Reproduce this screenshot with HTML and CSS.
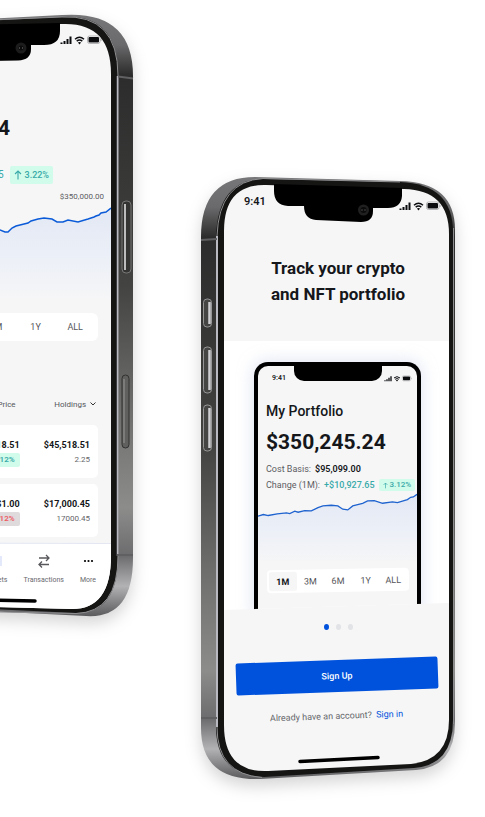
FILE: index.html
```
<!DOCTYPE html>
<html lang="en">
<head>
	<meta charset="UTF-8"/>
	<meta name="viewport" content="width=device-width, initial-scale=1.0" />
	<title>Portfolio Tracker</title>
	<link rel="stylesheet" href="styles.css">
</head>
<body>

<svg width="0" height="0" class="defs" aria-hidden="true">
	<symbol id="signals" viewBox="0 0 42 10">
		<path d="M1.500 9v-1.500M4.500 9v-3M7.500 9v-5M10.500 9v-7.500" stroke="#0b0c0e" stroke-width="2"/>
		<path d="M15 4.200q4.500-3.900 9 0M16.700 6.200q2.800-2.300 5.600 0" fill="none" stroke="#0b0c0e" stroke-width="1.500"/>
		<path d="M17.900 7.600q1.600-1.100 3.200 0l-1.600 1.900z" fill="#0b0c0e"/>
		<rect x="27.500" y="1" width="12.500" height="7.500" rx="2" fill="#fff" stroke="#b5b5b7" stroke-width="1"/>
		<rect x="28.500" y="2" width="10.500" height="5.500" rx="1" fill="#0b0c0e"/>
		<path d="M41 4v2" stroke="#a9a9ab"/>
	</symbol>
	<symbol id="up" viewBox="0 0 8 10">
		<path d="M4 9.500V1M1 4l3-3 3 3" fill="none" stroke="currentColor" stroke-width="1.100"/>
	</symbol>
	<linearGradient id="area" x1="0" y1="0" x2="0" y2="1">
		<stop offset="0" stop-color="#e2e8f4"/>
		<stop offset=".5" stop-color="#ebeff7"/>
		<stop offset="1" stop-color="#f6f6f7"/>
	</linearGradient>
	<linearGradient id="metal" x1="0" y1="0" x2="0" y2="1">
		<stop offset="0" stop-color="#777779"/>
		<stop offset=".05" stop-color="#6a6a6c"/>
		<stop offset=".1" stop-color="#2c2c2c"/>
		<stop offset=".45" stop-color="#434341"/>
		<stop offset=".65" stop-color="#6d6d6b"/>
		<stop offset=".82" stop-color="#8c8c8b"/>
		<stop offset=".9" stop-color="#6c6c6e"/>
		<stop offset=".95" stop-color="#b2b2b5"/>
		<stop offset="1" stop-color="#5b5b5e"/>
	</linearGradient>
</svg>

<main class="scene">

<section class="phone phone-back">
	<svg class="frame" viewBox="-116 14 250 604" aria-hidden="true">
		<path d="M-116 24L62 15Q133 10 133 76V558Q133 619 86 616L-116 606z" fill="url(#metal)"/>
		<path d="M-116 26L62 17Q118 13 118 76V556Q118 613 76 613L-116 604z" fill="#151514"/>
		<path d="M0 19.500L62 17Q118 14 118 76V556Q118 612 76 613.500L0 612" fill="none" stroke="#8f8f92" stroke-width="1"/>
		<path d="M117.500 76V556" stroke="#b9b9c2" stroke-width="1.500"/>
		<path d="M-116 28L62 24Q111 22 111 74V556Q111 609 72 609L-116 604z" fill="#f6f6f7"/>
		<path d="M-116 544L111 543V556Q111 609 72 609L-116 604z" fill="#fff"/>
		<path d="M-116 543L111 543.500" stroke="#e4e7f2"/>
		<path d="M-90 26L60 23V31Q60 45 44 45H31V49Q31 60 18 60.500L-60 62V46H-75Q-90 46-90 30z" fill="#000"/>
		<circle cx="21" cy="48" r="5.500" fill="#1c1c1c"/>
		<circle cx="21" cy="48" r="2.500" fill="#0b0b0b"/>
		<path d="M19.500 47v2M22.500 47v2" stroke="#444"/>
		<path d="M118 76.500l15 2M117 555h16" stroke="#606062" stroke-width="2"/>
		<rect x="122" y="201" width="9" height="72" rx="4" fill="#343433" stroke="#777" stroke-width="1"/>
		<path d="M125 204v66" stroke="#bcbcbc" stroke-width="2"/>
		<rect x="122" y="375" width="7" height="73" rx="3.500" fill="#60605f" stroke="#313131" stroke-width="1"/>
		<path d="M124 379v64" stroke="#989898"/>
		<path d="M-60 599L35 601" stroke="#000" stroke-width="3.500" stroke-linecap="round"/>
	</svg>
	<div class="screen">
		<div class="status status-back"><svg class="signals" aria-label="Signal, wifi and battery"><use href="#signals"/></svg></div>
		<div class="total total-back">$350,245.24</div>
		<div class="change change-back"><span>+$10,927.65</span><span class="badge badge-back"><svg class="up"><use href="#up"/></svg>3.22%</span></div>
		<div class="peak">$350,000.00</div>
		<svg class="chart" viewBox="-116 204 227 96" aria-hidden="true">
			<path d="M-116 240L-60 236L0 230L5 232L8 232L12 228L16 226L22 224.500L28 223L31 221L38 219L44 218L52 219L57 222L63 222L68 220L78 222L88 219L94 217L96 216L99 215L101 213L106 212L111 208V300H-116z" fill="url(#area)"/>
			<path d="M-116 240L-60 236L0 230L5 232L8 232L12 228L16 226L22 224.500L28 223L31 221L38 219L44 218L52 219L57 222L63 222L68 220L78 222L88 219L94 217L96 216L99 215L101 213L106 212L111 208" fill="none" stroke="#0b5bd8" stroke-width="1.500"/>
		</svg>
		<div class="ranges ranges-back">
			<button>1M</button><button>3M</button><button>6M</button><button>1Y</button><button>ALL</button>
		</div>
		<table class="holdings">
			<thead>
				<tr><th>Price</th><th>Holdings <svg class="caret" viewBox="0 0 6 4"><path d="M.5.5L3 3 5.500.5" fill="none" stroke="#333" stroke-width="1"/></svg></th></tr>
			</thead>
			<tbody>
				<tr><td><b>$45,518.51</b><span class="pill">3.12%</span></td><td><b>$45,518.51</b><span>2.25</span></td></tr>
				<tr><td><b>$1.00</b><span class="pill pill-down">3.12%</span></td><td><b>$17,000.45</b><span>17000.45</span></td></tr>
			</tbody>
		</table>
		<nav class="tabbar">
			<a href="#assets"><svg viewBox="0 0 16 16"><rect x="0" y="3" width="13" height="10" fill="#e3e8fa"/></svg>Assets</a>
			<a href="#transactions"><svg viewBox="0 0 16 16"><path d="M3 5h10M10 2l3 3-3 3M13 11.500H3M6 8.500l-3 3 3 3" fill="none" stroke="#58585c" stroke-width="1.300"/></svg>Transactions</a>
			<a href="#more"><svg viewBox="0 0 16 16"><circle cx="5" cy="8" r="1.100"/><circle cx="8.500" cy="8" r="1.100"/><circle cx="12" cy="8" r="1.100"/></svg>More</a>
		</nav>
	</div>
</section>

<section class="phone phone-front">
	<svg class="frame" viewBox="201 176 255 604" aria-hidden="true">
		<path d="M201 237Q201 177 255 177L400 181Q455 182 455 230V722Q455 767 416 770L260 779Q201 781 201 728z" fill="url(#metal)"/>
		<path d="M216 236Q218 180 263 179L400 182Q453 184 453 232V720Q453 765 414 768L264 777Q216 775 216 727z" fill="#151514"/>
		<path d="M262 777.500Q217 774 217 727V236Q219 181 263 178.500L400 182" fill="none" stroke="#8f8f92" stroke-width="1"/>
		<path d="M217 236V727" stroke="#b9b9c2" stroke-width="2"/>
		<path d="M453.500 228V724" stroke="#8d8d90"/>
		<path d="M224 231Q224 184 266 185L404 189Q449 190 449 234V720Q449 760 411 764L268 771Q224 773 224 725z" fill="#f6f6f7"/>
		<path d="M274 184L402 188V196Q401 208 388 208H373V211Q373 222 361 222L316 220Q304 219 304 206H288Q274 205 274 191z" fill="#000"/>
		<circle cx="363.500" cy="210" r="5.500" fill="#202020"/>
		<circle cx="363.500" cy="210" r="3" fill="#0b0b0b"/>
		<path d="M362 209v2M365 209v2" stroke="#444"/>
		<path d="M201 240l16-1M201 718h16" stroke="#606062" stroke-width="2"/>
		<g fill="#454544" stroke="#969696" stroke-width="1">
			<rect x="203.500" y="299" width="8" height="28" rx="3.500"/>
			<rect x="203.500" y="347" width="8" height="46" rx="3.500"/>
			<rect x="203.500" y="405" width="8" height="46" rx="3.500"/>
		</g>
		<path d="M209.500 302v22M209.500 350v40M209.500 408v40" stroke="#cfcfd2" stroke-width="2.500"/>
		<path d="M300 761.500L378 757.500" stroke="#000" stroke-width="3.500" stroke-linecap="round"/>
	</svg>
	<div class="screen">
		<div class="status status-front"><time>9:41</time><svg class="signals" aria-label="Signal, wifi and battery"><use href="#signals"/></svg></div>
		<h1>Track your crypto<br>and NFT portfolio</h1>
		<div class="preview">
			<div class="mini">
				<div class="mini-status"><time>9:41</time><span class="mini-notch"></span><svg class="signals"><use href="#signals"/></svg></div>
				<h2>My Portfolio</h2>
				<div class="total">$350,245.24</div>
				<div class="basis">Cost Basis: <b>$95,099.00</b></div>
				<div class="basis">Change (1M): <span class="gain">+$10,927.65</span><span class="badge"><svg class="up"><use href="#up"/></svg>3.12%</span></div>
				<svg class="chart" viewBox="204 462 480 210" aria-hidden="true">
					<path d="M204 532L220 527L235 530L262 525L290 522L300 524L315 517L325 520L345 515L365 516L385 506L400 501L425 499L445 501L460 511L475 513L490 501L520 493L535 486L555 485L580 493L610 489L625 491L655 482L665 475L673 474L684 466V672H204z" fill="url(#area)"/>
					<path d="M204 532L220 527L235 530L262 525L290 522L300 524L315 517L325 520L345 515L365 516L385 506L400 501L425 499L445 501L460 511L475 513L490 501L520 493L535 486L555 485L580 493L610 489L625 491L655 482L665 475L673 474L684 466" fill="none" stroke="#1f63cf" stroke-width="4"/>
				</svg>
				<div class="ranges">
					<button class="on">1M</button><button>3M</button><button>6M</button><button>1Y</button><button>ALL</button>
				</div>
			</div>
		</div>
		<div class="dots"><i class="on"></i><i></i><i></i></div>
		<button class="signup">Sign Up</button>
		<p class="signin">Already have an account? <a href="#signin">Sign in</a></p>
	</div>
</section>

</main>

</body>
</html>
```
FILE: styles.css
```
	html {
		font-family: Roboto, "Liberation Sans", sans-serif;
		font-size: 10px;
		color: #15171a;
		background: #fff;
	}
	body {
		margin: 0;
		overflow-x: hidden;
	}
	h1, h2, p {
		margin: 0;
	}
	button {
		font: inherit;
		color: inherit;
		border: 0;
		padding: 0;
		background: none;
	}
	a {
		text-decoration: none;
	}
	svg {
		display: block;
		flex: none;
	}
	.defs {
		position: absolute;
	}
	.scene {
		display: flex;
		align-items: flex-start;
		gap: 67px;
		padding: 14px 0 30px;
	}
	.phone {
		position: relative;
		flex: none;
		box-sizing: border-box;
	}
	.phone-back {
		width: 250px;
		margin-left: -116px;
		padding: 6px 23px 30px 0;
	}
	.phone-front {
		width: 255px;
		margin-top: 162px;
		padding: 9px 7px 54px 23px;
	}
	.frame {
		position: absolute;
		top: 0;
		left: 0;
		width: 100%;
		overflow: visible;
		filter: drop-shadow(0 7px 8px rgb(0 0 0 / .17));
	}
	.screen {
		position: relative;
		display: flex;
		flex-direction: column;
	}
	.signals {
		width: 42px;
		height: 10px;
	}
	.status {
		display: flex;
		justify-content: space-between;
		font-size: 11px;
		font-weight: 600;
	}
	.status-back {
		justify-content: flex-end;
		padding: 15px 9px 69px 0;
	}
	.status-front {
		box-sizing: border-box;
		height: 61px;
		padding: 9px 8px 0 20px;
		line-height: 16px;
	}
	.status-front .signals {
		margin-top: 7px;
	}
	.total {
		font-size: 21px;
		line-height: 24px;
		font-weight: 700;
	}
	.total-back {
		line-height: 28px;
		text-align: right;
		padding-right: 101px;
	}
	.change {
		display: flex;
		justify-content: flex-end;
		align-items: center;
		gap: 6px;
		color: #38aaa9;
	}
	.change-back {
		margin-top: 24px;
		padding-right: 58px;
		line-height: 18px;
	}
	.badge {
		display: flex;
		align-items: center;
		justify-content: center;
		gap: 2px;
		height: 12px;
		padding: 0 4px;
		border-radius: 2px;
		background: #d1fbea;
		color: #38aaa9;
		font-size: 8px;
		font-weight: 500;
	}
	.badge-back {
		height: 18px;
		gap: 3px;
		font-size: 9px;
	}
	.up {
		width: 5px;
		height: 7px;
	}
	.badge-back .up {
		width: 8px;
		height: 10px;
	}
	.peak {
		margin-top: 6px;
		padding-right: 7px;
		font-size: 8px;
		line-height: 14px;
		text-align: right;
		color: #5c5d61;
	}
	.chart {
		width: 100%;
	}
	.ranges {
		display: grid;
		grid-template-columns: repeat(5, 1fr);
		height: 23px;
		margin: 6px 8px 0 9px;
		padding: 2px;
		box-sizing: border-box;
		border-radius: 4px;
		background: #fff;
		color: #55565a;
		font-size: 9px;
		transform: rotate(-1deg);
	}
	.ranges .on {
		background: #f6f6f7;
		color: #15171a;
		font-weight: 700;
		border-radius: 2px;
	}
	.ranges-back {
		height: 28px;
		margin: 13px 13px 0;
		padding: 0 3px 0 0;
		border-radius: 6px;
		transform: none;
	}
	.holdings {
		margin: 48px 13px 0;
		border-collapse: separate;
		border-spacing: 0 6px;
		text-align: right;
	}
	.holdings th {
		height: 18px;
		padding: 0 2px 6px 0;
		font-size: 8px;
		font-weight: 400;
		color: #55565a;
		text-align: right;
	}
	.holdings th:first-child {
		width: 61%;
		padding-right: 4px;
	}
	.caret {
		display: inline-block;
		width: 6px;
		height: 4px;
		margin-left: 2px;
		vertical-align: middle;
	}
	.holdings td {
		height: 53px;
		padding: 0 8px 0 0;
		background: #fff;
		color: #65666a;
		font-size: 8px;
	}
	.holdings td:first-child {
		padding-right: 0;
		border-radius: 5px 0 0 5px;
	}
	.holdings td:last-child {
		border-radius: 0 5px 5px 0;
	}
	.holdings b {
		display: block;
		font-size: 9px;
		line-height: 16px;
		font-weight: 700;
		color: #15171a;
	}
	.holdings td span {
		display: inline-block;
		line-height: 14px;
	}
	.holdings .pill {
		padding: 0 5px;
		background: #d1fbea;
		color: #38aaa9;
		font-weight: 600;
		border-radius: 2px;
	}
	.holdings .pill-down {
		background: #dfdbdd;
		color: #ee5a62;
	}
	.tabbar {
		display: flex;
		justify-content: flex-end;
		gap: 16px;
		padding: 10px 15px 0 0;
	}
	.tabbar a {
		display: flex;
		flex-direction: column;
		align-items: center;
		gap: 5px;
		font-size: 7px;
		line-height: 12px;
		color: #696a6e;
	}
	.tabbar svg {
		width: 16px;
		height: 16px;
	}
	h1 {
		height: 86px;
		padding-top: 9px;
		padding-left: 3px;
		text-align: center;
		font-size: 17px;
		line-height: 26px;
		font-weight: 700;
	}
	.preview {
		height: 248px;
		padding: 21px 28px 0 30px;
		background: #fff;
		clip-path: polygon(0 0, 100% 0, 100% 262px, 0 100%);
	}
	.mini {
		height: 247px;
		border: 4px solid #000;
		border-width: 4px 4px 0;
		border-radius: 14px 14px 0 0;
		background: #f6f6f7;
		box-shadow: 0 0 14px 3px rgb(205 214 236 / .5);
	}
	.mini-status {
		display: flex;
		height: 36px;
		padding: 0 5px 0 14px;
		font-size: 7px;
		font-weight: 600;
		line-height: 24px;
	}
	.mini-notch {
		width: 88px;
		height: 15px;
		margin: 0 2px 0 auto;
		border-radius: 0 0 10px 10px;
		background: #000;
	}
	.mini-status .signals {
		width: 28px;
		height: 7px;
		margin-top: 9px;
	}
	.mini h2 {
		padding-left: 8px;
		font-size: 14px;
		line-height: 18px;
		font-weight: 500;
	}
	.mini .total {
		padding: 10px 0 7px 8px;
	}
	.basis {
		display: flex;
		align-items: center;
		gap: 4px;
		padding-left: 8px;
		font-size: 9px;
		line-height: 16px;
		color: #5c5d61;
		white-space: nowrap;
	}
	.basis b {
		font-weight: 600;
		color: #15171a;
	}
	.gain {
		color: #38aaa9;
		font-weight: 500;
	}
	.dots {
		display: flex;
		justify-content: center;
		gap: 7px;
		margin: 14px 0 30px 3px;
	}
	.dots i {
		width: 5px;
		height: 6px;
		border-radius: 50%;
		background: #e2e3e6;
	}
	.dots .on {
		background: #0052dc;
	}
	.signup {
		height: 32px;
		margin: 0 11px 0 12px;
		border-radius: 2px;
		background: #0052dc;
		color: #fff;
		font-size: 9px;
		font-weight: 500;
		transform: rotate(-2deg);
	}
	.signin {
		margin-top: 17px;
		font-size: 9px;
		line-height: 14px;
		text-align: center;
		color: #65666a;
		transform: rotate(-2deg);
	}
	.signin a {
		margin-left: 2px;
		color: #0052dc;
	}
```
